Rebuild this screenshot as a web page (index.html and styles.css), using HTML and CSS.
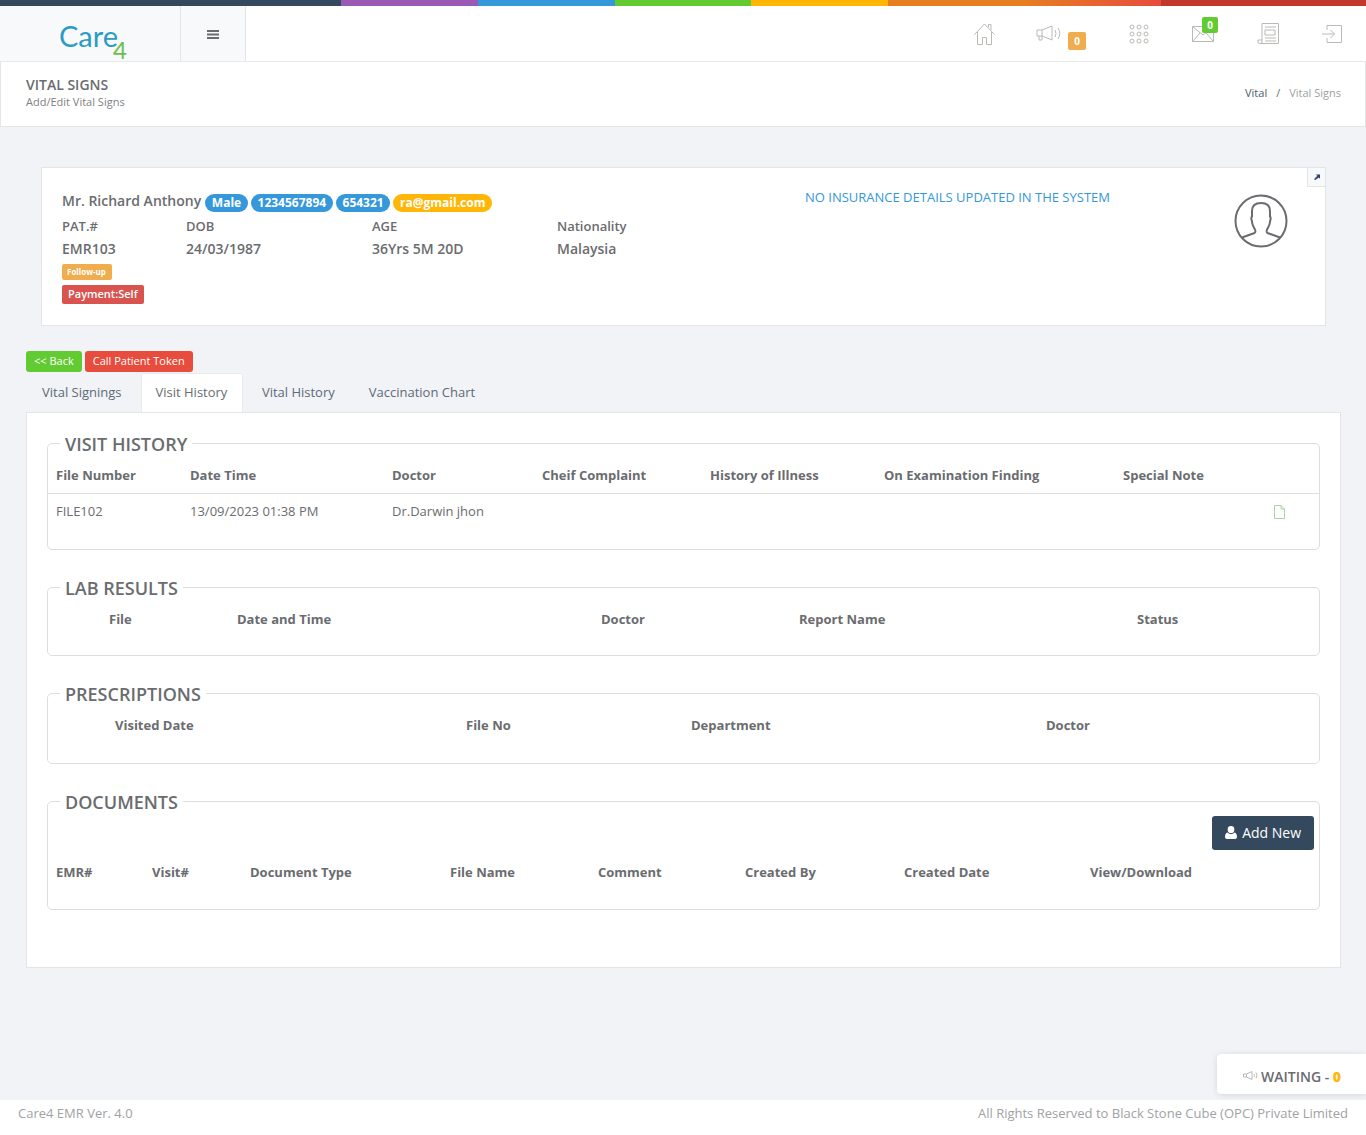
FILE: index.html
```html
<!DOCTYPE html>
<html lang="en">
<head>
    <meta charset="UTF-8">
    <meta name="viewport" content="width=device-width, initial-scale=1.0">
    <title>Vital Signs</title>
    <link rel="stylesheet" href="styles.css">
</head>
<body>
    <div class="color-line">
        <span class="line-dark"></span>
        <span class="line-purple"></span>
        <span class="line-blue"></span>
        <span class="line-green"></span>
        <span class="line-yellow"></span>
        <span class="line-orange"></span>
        <span class="line-red"></span>
    </div>

    <header class="topbar">
        <div class="logo"><span class="logo-care">Care</span><span class="logo-four">4</span></div>
        <div class="menu-toggle">
            <svg width="12" height="9" viewBox="0 0 12 9"><path d="M0 1h12M0 4.500h12M0 8h12" stroke="#6a6c6f" stroke-width="2"/></svg>
        </div>
        <nav class="top-nav">
            <a class="nav-item nav-home">
                <svg width="21" height="22" viewBox="0 0 21 22" fill="none" stroke="#b9bab5"><path d="M.5 11.500 10.500 1l10 10.500M3.500 9v12.500h5v-7h4v7h5V9M14.500 4V1.500h2.500V7"/></svg>
            </a>
            <a class="nav-item">
                <svg width="27" height="18" viewBox="0 0 27 18" fill="none" stroke="#b9bab5"><path d="M1 5h5v6H1zM6 5l10-4v14L6 11M3 11v4h3v-4M19 5q2 3.500 0 7M22 3q3.500 5.500 0 11"/></svg>
                <span class="nav-badge badge-orange">0</span>
            </a>
            <a class="nav-item">
                <svg width="20" height="20" viewBox="0 0 20 20" fill="none" stroke="#b9bab5"><circle cx="3" cy="3" r="2"/><circle cx="10" cy="3" r="2"/><circle cx="17" cy="3" r="2"/><circle cx="3" cy="10" r="2"/><circle cx="10" cy="10" r="2"/><circle cx="17" cy="10" r="2"/><circle cx="3" cy="17" r="2"/><circle cx="10" cy="17" r="2"/><circle cx="17" cy="17" r="2"/></svg>
            </a>
            <a class="nav-item nav-mail">
                <svg width="22" height="16" viewBox="0 0 22 16" fill="none" stroke="#b9bab5"><path d="M.5.500h21v15H.5zM.5.500 11 9 21.500.500M.5 15.500 8 7M21.500 15.500 14 7"/></svg>
                <span class="nav-badge badge-green">0</span>
            </a>
            <a class="nav-item">
                <svg width="22" height="22" viewBox="0 0 22 22" fill="none" stroke="#b9bab5"><path d="M5 17V.5h16.500v20H3M5 17H1v2q0 1.500 2 1.500t2-1.500zM8 4h11M8 7h10v5H8zM8 15h11M8 18h11"/></svg>
            </a>
            <a class="nav-item">
                <svg width="20" height="18" viewBox="0 0 20 18" fill="none" stroke="#b9bab5"><path d="M5 5V.5h14.500v17H5V13M0 9h12M8.500 5l4 4-4 4"/></svg>
            </a>
        </nav>
    </header>

    <div class="page-title">
        <div>
            <h2>VITAL SIGNS</h2>
            <small>Add/Edit Vital Signs</small>
        </div>
        <div class="breadcrumb"><a>Vital</a><span class="crumb-sep">/</span><span class="crumb-active">Vital Signs</span></div>
    </div>

    <main class="content">
        <section class="patient-card">
            <a class="card-expand">
                <svg width="6" height="6" viewBox="0 0 7 7"><path d="M0 6 4 2 2 .5h5v5L5.500 4 1.500 7z" fill="#2b3f73"/></svg>
            </a>
            <div class="patient-info">
                <div class="patient-name">
                    <span class="name-text">Mr. Richard Anthony</span>
                    <span class="pill pill-blue">Male</span>
                    <span class="pill pill-blue">1234567894</span>
                    <span class="pill pill-blue">654321</span>
                    <span class="pill pill-yellow">ra@gmail.com</span>
                </div>
                <div class="patient-grid">
                    <span>PAT.#</span><span>DOB</span><span>AGE</span><span>Nationality</span>
                    <span>EMR103</span><span>24/03/1987</span><span>36Yrs 5M 20D</span><span>Malaysia</span>
                </div>
                <div><span class="tag tag-followup">Follow-up</span></div>
                <div><span class="tag tag-payment">Payment:Self</span></div>
            </div>
            <div class="insurance">NO INSURANCE DETAILS UPDATED IN THE SYSTEM</div>
            <div class="avatar">
                <svg width="54" height="54" viewBox="0 0 54 54" fill="none" stroke="#6a6c6f" stroke-width="2"><circle cx="27" cy="27" r="25.500"/><path d="M8 43.500 20.500 39q1.500-1 .5-3.500-3-5-3-8l-.5-2q-.5-2 .5-3V17q0-8 9-8t9 8v5.500q1 1 .5 3l-.5 2q0 3-3 8-1 2.500.5 3.500L46 43.500"/></svg>
            </div>
        </section>

        <div class="action-btns">
            <button class="btn-small btn-green">&lt;&lt; Back</button>
            <button class="btn-small btn-red">Call Patient Token</button>
        </div>

        <ul class="tabs">
            <li>Vital Signings</li>
            <li class="active">Visit History</li>
            <li>Vital History</li>
            <li>Vaccination Chart</li>
        </ul>

        <div class="tab-panel">
            <fieldset class="group group-visit">
                <legend>VISIT HISTORY</legend>
                <div class="grid-row row-head cols-visit">
                    <span>File Number</span><span>Date Time</span><span>Doctor</span><span>Cheif Complaint</span><span>History of Illness</span><span>On Examination Finding</span><span>Special Note</span>
                </div>
                <div class="grid-row row-data cols-visit">
                    <span>FILE102</span><span>13/09/2023 01:38 PM</span><span>Dr.Darwin jhon</span><span></span><span></span><span></span><span></span>
                    <span class="file-icon">
                        <svg width="11" height="14" viewBox="0 0 11 14" fill="none" stroke="#a5d89a"><path d="M.5.500h6.500l3.500 3.500v9.500H.5zM7 .5V4h3.500"/></svg>
                    </span>
                </div>
            </fieldset>

            <fieldset class="group group-lab">
                <legend>LAB RESULTS</legend>
                <div class="grid-row row-plain cols-lab">
                    <span>File</span><span>Date and Time</span><span>Doctor</span><span>Report Name</span><span>Status</span>
                </div>
            </fieldset>

            <fieldset class="group group-presc">
                <legend>PRESCRIPTIONS</legend>
                <div class="grid-row row-plain cols-presc">
                    <span>Visited Date</span><span>File No</span><span>Department</span><span>Doctor</span>
                </div>
            </fieldset>

            <fieldset class="group group-docs">
                <legend>DOCUMENTS</legend>
                <div class="docs-toolbar">
                    <button class="btn-add">
                        <svg width="12" height="13" viewBox="0 0 12 13"><path d="M6 0a3.300 3.300 0 0 1 3.300 3.500A3.300 3.300 0 0 1 6 7 3.300 3.300 0 0 1 2.700 3.500 3.300 3.300 0 0 1 6 0zM2.500 6.500Q4 8 6 8t3.500-1.500Q12 7 12 11q0 2-2 2H2q-2 0-2-2 0-4 2.500-4.500z" fill="#fff"/></svg>
                        Add New
                    </button>
                </div>
                <div class="grid-row row-docs cols-docs">
                    <span>EMR#</span><span>Visit#</span><span>Document Type</span><span>File Name</span><span>Comment</span><span>Created By</span><span>Created Date</span><span>View/Download</span>
                </div>
            </fieldset>
        </div>
    </main>

    <div class="waiting">
        <svg width="15" height="10" viewBox="0 0 15 10" fill="none" stroke="#b9bab5"><path d="M.5 3h3v3h-3zM3.500 3 9 .5v8L3.500 6M11 3q1 1.500 0 3M13 1.500q2 3 0 6"/></svg>
        <span>WAITING - <b>0</b></span>
    </div>

    <footer class="footer">
        <span>Care4 EMR Ver. 4.0</span>
        <span>All Rights Reserved to Black Stone Cube (OPC) Private Limited</span>
    </footer>
</body>
</html>
```

FILE: styles.css
```css
* {
    box-sizing: border-box;
}

body {
    margin: 0;
    height: 100vh;
    display: flex;
    flex-direction: column;
    overflow: hidden;
    background-color: #f1f3f6;
    color: #6a6c6f;
    font-family: "Open Sans", "Liberation Sans", sans-serif;
    font-size: 13px;
}

/* top colour stripe */
.color-line {
    display: flex;
    height: 6px;
    flex: none;
}

.color-line span {
    display: block;
}

.line-dark { width: 341px; background-color: #34495e; }
.line-purple { width: 137px; background-color: #9b59b6; }
.line-blue { width: 137px; background-color: #3498db; }
.line-green { width: 136px; background-color: #62cb31; }
.line-yellow { width: 137px; background-color: #ffb606; }
.line-orange { width: 273px; background: linear-gradient(90deg, #e67e22 50%, #e74c3c); }
.line-red { width: 205px; background-color: #c0392b; }

/* header */
.topbar {
    display: flex;
    flex: none;
    height: 56px;
    background-color: #fff;
    border-bottom: 1px solid #e8e9eb;
}

.logo {
    width: 181px;
    padding: 12px 0 0 59px;
    background-color: #f7f9fa;
    border-right: 1px solid #e4e5e7;
    white-space: nowrap;
}

.logo-care {
    font-family: Lato, "Open Sans", sans-serif;
    font-size: 29px;
    line-height: 36px;
    color: #2a9cc4;
}

.logo-four {
    position: relative;
    top: 12px;
    margin-left: -5px;
    font-family: Lato, "Open Sans", sans-serif;
    font-size: 24px;
    line-height: 20px;
    color: #6cc04a;
}

.menu-toggle {
    width: 65px;
    display: flex;
    justify-content: center;
    padding-top: 24px;
    background-color: #f7f9fa;
    border-right: 1px solid #e4e5e7;
}

.top-nav {
    flex: 1;
    display: flex;
    justify-content: flex-end;
    align-items: center;
    gap: 43px;
    padding-right: 24px;
}

.nav-item {
    position: relative;
    display: flex;
    align-items: center;
}

.nav-home {
    margin-right: -2px;
}

.nav-badge {
    display: block;
    font-size: 10px;
    font-weight: 700;
    text-align: center;
    color: #fff;
    border-radius: 2px;
}

.badge-orange {
    width: 18px;
    height: 18px;
    line-height: 19px;
    margin: 14px 0 0 5px;
    background-color: #f0ad4e;
}

.badge-green {
    position: absolute;
    top: -9px;
    right: -4px;
    width: 16px;
    height: 16px;
    line-height: 16px;
    background-color: #62cb31;
}

/* page title */
.page-title {
    display: flex;
    flex: none;
    justify-content: space-between;
    height: 65px;
    padding: 15px 24px 0 25px;
    background-color: #fff;
    border: 1px solid #e4e5e7;
    border-top: none;
}

.page-title h2 {
    margin: 0;
    font-size: 14px;
    font-weight: 600;
    line-height: 16px;
}

.page-title small {
    display: block;
    font-size: 11px;
    line-height: 17px;
    color: #7f8184;
}

.breadcrumb {
    padding-top: 8px;
    font-size: 11px;
}

.breadcrumb a {
    color: #4d5c6e;
}

.crumb-sep {
    margin: 0 9px;
}

.crumb-active {
    color: #9d9fa2;
}

/* main area */
.content {
    flex: 1;
    padding: 40px 25px 0 26px;
}

.patient-card {
    position: relative;
    display: flex;
    height: 159px;
    margin: 0 15px 25px 15px;
    padding: 23px 0 0 20px;
    background-color: #fff;
    border: 1px solid #e4e5e7;
}

.card-expand {
    position: absolute;
    top: -1px;
    right: -1px;
    width: 19px;
    height: 20px;
    display: flex;
    align-items: center;
    justify-content: center;
    background-color: #f7f9fa;
    border: 1px solid #e4e5e7;
}

.patient-info {
    width: 743px;
}

.patient-name {
    display: flex;
    gap: 3px;
    height: 20px;
}

.name-text {
    margin-right: 1px;
    font-size: 14px;
    font-weight: 600;
    line-height: 20px;
}

.pill {
    height: 18px;
    margin-top: 3px;
    padding: 0 6.7px;
    font-size: 12px;
    font-weight: 700;
    line-height: 18px;
    color: #fff;
    border-radius: 9px;
}

.pill-blue {
    background-color: #3498db;
}

.pill-yellow {
    background-color: #ffb606;
}

.patient-grid {
    display: grid;
    grid-template-columns: 124px 186px 185px 1fr;
    grid-template-rows: 22px 23px;
    margin-top: 4px;
    line-height: 23px;
    font-weight: 600;
}

.patient-grid span:nth-child(n+5) {
    font-size: 14px;
}

.tag {
    display: inline-block;
    color: #fff;
    border-radius: 2px;
}

.tag-followup {
    height: 16px;
    margin-top: 4px;
    padding: 0 6px 0 5px;
    font-size: 8px;
    font-weight: 700;
    line-height: 16px;
    background-color: #f0ad4e;
}

.tag-payment {
    height: 19px;
    margin-top: 5px;
    padding: 0 6px;
    font-size: 11px;
    font-weight: 600;
    line-height: 18px;
    background-color: #d9534f;
}

.insurance {
    width: 374px;
    color: #3498db;
    line-height: 12px;
}

.avatar {
    margin: 3px 0 0 55px;
}

.action-btns {
    display: flex;
    gap: 3px;
    height: 22px;
}

.btn-small {
    height: 21px;
    padding: 0 8px 2px 8px;
    font-family: inherit;
    font-size: 11px;
    color: #fff;
    border: none;
    border-radius: 3px;
}

.btn-green {
    background-color: #62cb31;
}

.btn-red {
    background-color: #e74c3c;
}

/* tabs */
.tabs {
    display: flex;
    gap: 4px;
    height: 39px;
    margin: 0;
    padding: 0 0 0 1px;
    list-style: none;
}

.tabs li {
    padding: 0 15px;
    line-height: 38px;
    color: #5d6a78;
}

.tabs .active {
    padding: 0 14.5px 0 14px;
    line-height: 36px;
    color: #6a6c6f;
    background-color: #fff;
    border: 1px solid #e9eaec;
    border-bottom: none;
    border-radius: 2px 2px 0 0;
}

.tab-panel {
    height: 556px;
    padding: 19px 20px 0 20px;
    background-color: #fff;
    border: 1px solid #e4e5e7;
}

/* fieldsets */
.group {
    min-width: 0;
    margin: 0 0 26px 0;
    padding: 0 0 0 8px;
    border: 1px solid #ddd;
    border-radius: 5px;
}

.group legend {
    margin-left: 4px;
    padding: 2px 5px 0 5px;
    font-size: 18px;
    font-weight: 600;
    line-height: 20px;
}

.group-visit {
    height: 118px;
}

.group-lab {
    height: 80px;
}

.group-presc {
    height: 82px;
}

.group-docs {
    height: 120px;
}

.grid-row {
    display: grid;
    align-items: center;
}

.row-head {
    height: 40px;
    margin-left: -8px;
    padding: 3px 0 0 8px;
    font-weight: 700;
    border-bottom: 1px solid #ddd;
}

.row-data {
    align-items: start;
    padding-top: 8px;
}

.row-plain {
    height: 36px;
    padding-top: 6px;
    font-weight: 700;
}

.row-docs {
    height: 44px;
    font-weight: 700;
}

.cols-visit {
    grid-template-columns: 134px 202px 150px 168px 174px 239px 150px 1fr;
}

.cols-lab {
    grid-template-columns: 128px 364px 198px 338px 1fr;
    margin-left: 53px;
}

.cols-presc {
    grid-template-columns: 351px 225px 355px 1fr;
    margin-left: 59px;
}

.cols-docs {
    grid-template-columns: 96px 98px 200px 148px 147px 159px 186px 1fr;
}

.docs-toolbar {
    display: flex;
    justify-content: flex-end;
    padding: 4px 5px 0 0;
}

.btn-add {
    display: flex;
    align-items: center;
    gap: 5px;
    height: 34px;
    padding: 0 13px 1px 13px;
    font-family: inherit;
    font-size: 14px;
    color: #fff;
    background-color: #34495e;
    border: none;
    border-radius: 3px;
}

.file-icon {
    display: flex;
    padding: 3px 0 0 1px;
}

/* waiting box sits over the page corner */
.waiting {
    position: absolute;
    top: 1054px;
    right: 0;
    display: flex;
    align-items: center;
    gap: 3px;
    width: 149px;
    height: 40px;
    padding: 4px 0 0 26px;
    font-size: 14px;
    font-weight: 600;
    background-color: #fff;
    border-radius: 4px 0 0 4px;
    box-shadow: 0 1px 6px rgba(0, 0, 0, 0.12);
}

.waiting b {
    color: #ffb606;
}

.footer {
    display: flex;
    flex: none;
    justify-content: space-between;
    height: 35px;
    padding: 4px 18px 0 18px;
    color: #a0a2a5;
    background-color: #fff;
}
```
